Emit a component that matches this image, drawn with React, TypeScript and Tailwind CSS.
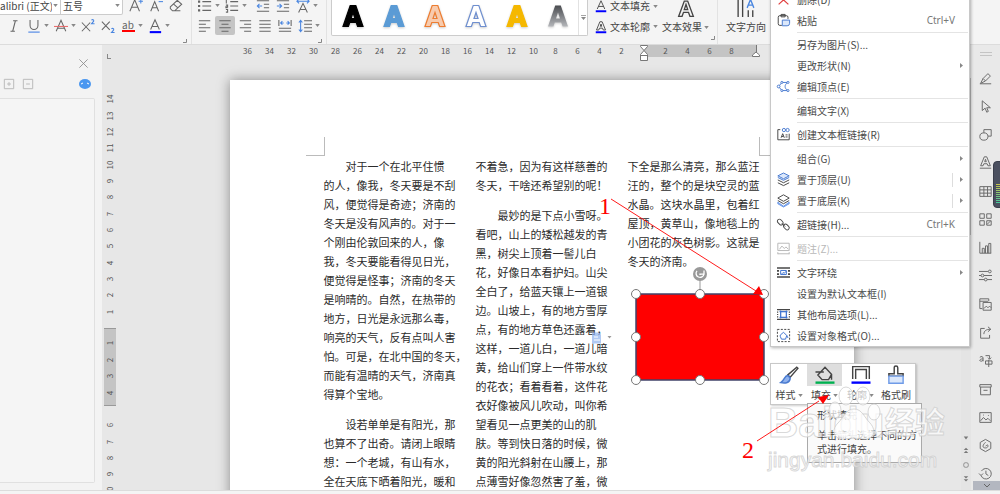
import type { ReactNode } from "react";
import { clsx } from "clsx";

// ============================================================
// Document content
// ============================================================

interface Paragraph {
  indent: boolean;
  lines: string[];
}

const COLUMNS: Paragraph[][] = [
  [
    {
      indent: true,
      lines: [
        "对于一个在北平住惯",
        "的人，像我，冬天要是不刮",
        "风，便觉得是奇迹；济南的",
        "冬天是没有风声的。对于一",
        "个刚由伦敦回来的人，像",
        "我，冬天要能看得见日光，",
        "便觉得是怪事；济南的冬天",
        "是响晴的。自然，在热带的",
        "地方，日光是永远那么毒，",
        "响亮的天气，反有点叫人害",
        "怕。可是，在北中国的冬天，",
        "而能有温晴的天气，济南真",
        "得算个宝地。",
      ],
    },
    {
      indent: true,
      lines: [
        "设若单单是有阳光，那",
        "也算不了出奇。请闭上眼睛",
        "想：一个老城，有山有水，",
        "全在天底下晒着阳光，暖和",
      ],
    },
  ],
  [
    { indent: false, lines: ["不着急，因为有这样慈善的", "冬天，干啥还希望别的呢！"] },
    {
      indent: true,
      lines: [
        "最妙的是下点小雪呀。",
        "看吧，山上的矮松越发的青",
        "黑，树尖上顶着一髻儿白",
        "花，好像日本看护妇。山尖",
        "全白了，给蓝天镶上一道银",
        "边。山坡上，有的地方雪厚",
        "点，有的地方草色还露着，",
        "这样，一道儿白，一道儿暗",
        "黄，给山们穿上一件带水纹",
        "的花衣；看着看着，这件花",
        "衣好像被风儿吹动，叫你希",
        "望看见一点更美的山的肌",
        "肤。等到快日落的时候，微",
        "黄的阳光斜射在山腰上，那",
        "点薄雪好像忽然害了羞，微",
      ],
    },
  ],
  [
    {
      indent: false,
      lines: [
        "下全是那么清亮，那么蓝汪",
        "汪的，整个的是块空灵的蓝",
        "水晶。这块水晶里，包着红",
        "屋顶，黄草山，像地毯上的",
        "小团花的灰色树影。这就是",
        "冬天的济南。",
      ],
    },
  ],
];

// ============================================================
// Small shared pieces
// ============================================================

function Svg({
  children,
  size = "size-[14px]",
  className,
}: {
  children: ReactNode;
  size?: string;
  className?: string;
}) {
  return (
    <svg
      viewBox="0 0 16 16"
      fill="none"
      stroke="currentColor"
      strokeWidth="1.2"
      aria-hidden="true"
      className={clsx("shrink-0 overflow-visible", size, className)}
    >
      {children}
    </svg>
  );
}

function Caret() {
  return (
    <svg viewBox="0 0 6 4" className="h-[3px] w-[5px] shrink-0 fill-[#888]" aria-hidden="true">
      <path d="M0 0h6L3 4z" />
    </svg>
  );
}

function Corner() {
  return (
    <svg viewBox="0 0 4 4" className="size-1 fill-none stroke-[#888]" aria-hidden="true">
      <path d="M3.5 0v3.5H0" />
    </svg>
  );
}

function Tool({
  label,
  caret,
  active,
  children,
}: {
  label: string;
  caret?: boolean;
  active?: boolean;
  children: ReactNode;
}) {
  return (
    <button
      type="button"
      aria-label={label}
      className={clsx(
        "flex h-[19px] shrink-0 items-center rounded-xs text-[#666]",
        caret ? "w-[27px]" : "w-5",
        active && "bg-[#c4c4c4]",
      )}
    >
      <span className="flex w-5 shrink-0 justify-center">{children}</span>
      {caret && <Caret />}
    </button>
  );
}

function Lines({ d, accent }: { d: string; accent?: string }) {
  return (
    <Svg>
      <path d={d} />
      {accent && <path d={accent} stroke="#4a86e0" />}
    </Svg>
  );
}

const LETTER_A = "M3 12 8 1l5 11M4.6 8.6h6.8";

// ============================================================
// Ribbon
// ============================================================

const WORD_ART = [
  { name: "黑色", fill: "#000000", stroke: "#000000" },
  { name: "蓝色", fill: "#5b9bd5", stroke: "#5b9bd5" },
  { name: "橙色轮廓", fill: "#f8cbad", stroke: "#ed7d31" },
  { name: "蓝色轮廓", fill: "#ffffff", stroke: "#6f8fcf" },
  { name: "金色", fill: "#f5b800", stroke: "#f5b800" },
  { name: "灰色渐变", fill: "url(#gray-fade)", stroke: "none" },
];

function FontGroup() {
  return (
    <div className="flex w-[192px] shrink-0 flex-col border-r border-[#e2e2e2]">
      <div className="-mt-1 flex h-[19px] items-center">
        <div className="mr-[3px] flex h-[19px] w-[123px] rounded-br-xs border border-l-0 border-[#ccc] bg-white text-[#444]">
          <label className="flex w-[61px] items-center justify-between border-r border-[#ccc] pr-0.5">
            <select aria-label="字体" className="w-[52px] appearance-none text-[10px] outline-none">
              <option>alibri (正文)</option>
            </select>
            <Caret />
          </label>
          <label className="flex flex-1 items-center justify-between pr-0.5 pl-0.5">
            <select aria-label="字号" className="w-10 appearance-none text-[10px] outline-none">
              <option>五号</option>
            </select>
            <Caret />
          </label>
        </div>
        <Tool label="增大字号">
          <Svg>
            <path d="M1 14 6.5 1 12 14M3 9.5h7" />
            <path d="M11 2.5h5M13.5 0v5" stroke="#4a86e0" />
          </Svg>
        </Tool>
        <Tool label="减小字号">
          <Svg>
            <path d="M2 14 6.5 3 11 14M3.6 10h5.8" />
            <path d="M11 3h5" stroke="#4a86e0" />
          </Svg>
        </Tool>
        <Tool label="清除格式">
          <Svg>
            <path d="m1.500 9 8-7.500 5 4.500-8 7.500H4L1.500 11zM5 5.500l5.500 5M4 13.500h9" />
          </Svg>
        </Tool>
      </div>
      <div className="mt-px flex items-center pl-1">
        <Tool label="倾斜">
          <Lines d="M7 2h5M4 14h5M9.600 2 6.500 14" />
        </Tool>
        <Tool label="下划线" caret>
          <Svg>
            <path d="M3.500 1v6.500a4.500 4.500 0 0 0 9 0V1" />
            <path d="M1.500 15h13" stroke="#6d9be8" strokeWidth="1.600" />
          </Svg>
        </Tool>
        <Tool label="删除线" caret>
          <Svg>
            <path d="M2.500 14 8 1.500 13.500 14M4.500 10.500h7" />
            <path d="M0 8.500h16" stroke="#e86a6a" />
          </Svg>
        </Tool>
        <Tool label="上标">
          <Svg>
            <path d="m1 4 9.500 10M10.500 4 1 14" />
            <path d="M12 1.500c1-1.500 3-.5 2.500 1L12 5.500h3.500" stroke="#4a86e0" />
          </Svg>
        </Tool>
        <Tool label="下标">
          <Svg>
            <path d="m1 3 9 9.500M10 3l-9 9.500" />
            <path d="M12 11.500c1-1.500 3-.5 2.500 1L12 15.500h3.500" stroke="#4a86e0" />
          </Svg>
        </Tool>
        <Tool label="突出显示" caret>
          <span className="flex w-[13px] flex-col items-center border-b-2 border-[#ff0000] text-[10px] leading-[10px]">
            ab
          </span>
        </Tool>
        <Tool label="字体颜色" caret>
          <Svg>
            <path d={LETTER_A} />
            <path d="M2 15h13" stroke="#0000ff" strokeWidth="2.400" />
          </Svg>
        </Tool>
      </div>
      <div className="mt-1 flex justify-end pr-1">
        <Corner />
      </div>
    </div>
  );
}

function ParagraphGroup() {
  return (
    <div className="flex w-[135px] shrink-0 flex-col border-r border-[#e2e2e2] pl-[3px]">
      <div className="-mt-1 flex h-[19px] items-center">
        <Tool label="项目符号" caret>
          <Svg>
            <path d="M5 3h10M5 8h10M5 13h10" />
            <path d="M0 3h2.500M0 8h2.500M0 13h2.500" strokeWidth="2.400" />
          </Svg>
        </Tool>
        <Tool label="编号" caret>
          <Svg>
            <path d="M6 3h9M6 8h9M6 13h9M1.500 1v4M1 7h2v2H1v1h2M1 12h2v3H1" />
          </Svg>
        </Tool>
        <div className="ml-1 flex">
          <Tool label="减少缩进">
            <Lines d="M1 2h14M9 6h6M9 10h6M1 14h14" accent="M7 8H1.500M4 5.500 1.500 8 4 10.500" />
          </Tool>
          <Tool label="增加缩进">
            <Lines d="M1 2h14M9 6h6M9 10h6M1 14h14" accent="M1 8h5.500M4 5.500 6.500 8 4 10.500" />
          </Tool>
          <Tool label="中文版式" caret>
            <Lines
              d="M3 15.500 8 5l5 10.500M4.600 12h6.800"
              accent="M1 2.500h14M3.500 0 1 2.500 3.500 5M12.500 0 15 2.500 12.500 5"
            />
          </Tool>
        </div>
      </div>
      <div className="mt-px flex items-center">
        <Tool label="左对齐">
          <Lines d="M1 2h13M1 6h8M1 10h13M1 14h8" />
        </Tool>
        <Tool label="居中对齐" active>
          <Lines d="M1.500 2h13M4 6h8M1.500 10h13M4 14h8" />
        </Tool>
        <Tool label="右对齐">
          <Lines d="M2 2h13M7 6h8M2 10h13M7 14h8" />
        </Tool>
        <Tool label="两端对齐">
          <Lines d="M1.500 2h13M1.500 6h13M1.500 10h13M1.500 14h13" />
        </Tool>
        <Tool label="分散对齐">
          <Lines
            d="M1 1v7M15 1v7M1 10.500h14M1 14h14"
            accent="M3 4.500h3.500M5 2.500 3 4.500l2 2M13 4.500H9.500M11 2.500l2 2-2 2"
          />
        </Tool>
        <Tool label="行距" caret>
          <Lines
            d="M7 2h9M7 6h9M7 10h9M7 14h9"
            accent="M3 1.500v13M1 4l2-2.500L5 4M1 12l2 2.500L5 12"
          />
        </Tool>
      </div>
      <div className="mt-1 flex justify-end pr-1">
        <Corner />
      </div>
    </div>
  );
}

function StylesGroup() {
  return (
    <div className="flex shrink-0 border-r border-[#e2e2e2] pl-1">
      <div className="flex h-9 w-[257px] rounded-b-xs border border-t-0 border-[#ccc] bg-white">
        {WORD_ART.map((art) => (
          <button
            key={art.name}
            type="button"
            aria-label={art.name}
            className="flex w-[41px] shrink-0 items-center justify-center pb-1"
          >
            <svg viewBox="0 0 24 24" className="size-6 drop-shadow-[0_1px_1px_rgba(0,0,0,0.2)]">
              <defs>
                <linearGradient id="gray-fade" x1="0" y1="0" x2="0" y2="1">
                  <stop offset="0" stopColor="#4a4c50" />
                  <stop offset="1" stopColor="#b4b6ba" />
                </linearGradient>
              </defs>
              <path
                d="M9.200 1.500h5.600L22 22.500h-5.400l-1.400-4H8.800l-1.400 4H2zM10 14.500h4l-2-6z"
                fill={art.fill}
                stroke={art.stroke}
                strokeWidth="1.200"
                fillRule="evenodd"
              />
            </svg>
          </button>
        ))}
        <button
          type="button"
          aria-label="更多样式"
          className="ml-auto flex w-[9px] items-center justify-center border-l border-[#e2e2e2]"
        >
          <svg viewBox="0 0 6 6" className="size-[5px] fill-[#888]">
            <path d="M0 0h6v1H0zM0 2.500h6L3 6z" />
          </svg>
        </button>
      </div>
      <div className="ml-[7px] flex flex-col">
        <button type="button" className="-mt-1 flex h-5 items-center gap-[3px] whitespace-nowrap text-[#444]">
          <Svg size="size-[12px]">
            <path d={LETTER_A} />
            <path d="M1 15h14" stroke="#0000ff" strokeWidth="2.600" />
          </Svg>
          文本填充 <Caret />
        </button>
        <button type="button" className="flex h-[21px] items-center gap-[3px] whitespace-nowrap text-[#444]">
          <Svg size="size-[12px]">
            <path d="M2 12 6.500 1h3L14 12h-3l-1-2.500H6L5 12zM7 7h2L8 4z" />
            <path d="M1 15h14" stroke="#0000ff" strokeWidth="2.600" />
          </Svg>
          文本轮廓 <Caret />
        </button>
      </div>
      <button type="button" className="ml-1 flex flex-col items-center whitespace-nowrap text-[#444]">
        <Svg size="size-[18px]">
          <path d="M1.500 14.500 6.500 1h3l5 13.500h-3l-1.300-3.500H5.800l-1.300 3.500zM6.500 8.500h3L8 4z" />
        </Svg>
        <span className="mt-px flex items-center gap-0.5">
          文本效果 <Caret />
        </span>
      </button>
      <div className="flex items-end px-0.5 pb-1">
        <Corner />
      </div>
    </div>
  );
}

function Ribbon() {
  return (
    <header className="flex h-[45px] shrink-0 overflow-hidden border-b border-[#dcdcdc] bg-[#f4f4f4] text-[10px] leading-4">
      <FontGroup />
      <ParagraphGroup />
      <StylesGroup />
      <button type="button" className="ml-2 flex shrink-0 flex-col items-center text-[#444]">
        <Svg size="size-[18px]">
          <path d="M1 0v15M5 0v15M10 9v6M14 9v6" />
          <path d="m9 7 3-7.500L15 7M10 4.500h4" stroke="#4a86e0" />
        </Svg>
        <span className="mt-px">文字方向</span>
      </button>
    </header>
  );
}

// ============================================================
// Left pane and rulers
// ============================================================

function LeftPane() {
  return (
    <aside className="flex w-[102px] shrink-0 flex-col bg-[#f3f3f3] pb-[7px]">
      <div className="flex h-[30px] items-end justify-end pr-[13px] pb-1.5">
        <button type="button" aria-label="关闭" className="text-[#888]">
          <Svg size="size-[11px]">
            <path d="m2 2 12 12M14 2 2 14" />
          </Svg>
        </button>
      </div>
      <div className="flex h-[23px] items-start gap-[9px] pt-1 pr-[11px] pl-1 text-[#bbb]">
        <button type="button" aria-label="展开">
          <Svg size="size-[10px]">
            <path d="M.5.5h15v15H.5zM5 8h6M8 5v6" strokeWidth="1.600" />
          </Svg>
        </button>
        <button type="button" aria-label="折叠">
          <Svg size="size-[10px]">
            <path d="M.5.5h15v15H.5zM5 8h6" strokeWidth="1.600" />
          </Svg>
        </button>
        <button type="button" aria-label="智能识别" className="ml-auto">
          <svg viewBox="0 0 12 10" className="h-[10px] w-3">
            <ellipse cx="6" cy="5" rx="6" ry="5" fill="#4a97f0" />
            <path d="M2 5l2-1M10 5 8 4" stroke="#fff" fill="none" />
          </svg>
        </button>
      </div>
      <div className="mr-[7px] flex-1 rounded-r-xs border border-l-0 border-[#e0e0e0] bg-[#f5f5f5]" />
    </aside>
  );
}

function VerticalNumbers({ values }: { values: number[] }) {
  return values.map((n) => (
    <span key={n} className="flex flex-1 items-center justify-center">
      <span className="-rotate-90">{n}</span>
    </span>
  ));
}

function VerticalRuler() {
  return (
    <div className="flex w-[14px] shrink-0 flex-col overflow-hidden pl-0.5 text-[8px] leading-3 text-[#555]">
      <span className="ml-[3px] h-[14px] w-1 shrink-0 self-start border-b border-l border-[#888] [clip-path:inset(9px_0_0_0)]" />
      <div className="mt-8 flex h-[229px] shrink-0 flex-col">
        <VerticalNumbers values={[14, 13, 12, 11, 10, 9, 8, 7, 6, 5, 4, 3, 2, 1]} />
      </div>
      <div className="mt-2 flex h-[78px] shrink-0 flex-col border-y border-[#999] bg-[#c4c4c4] pt-1.5 pb-1">
        <VerticalNumbers values={[1, 2, 3, 4]} />
      </div>
      <div className="mt-[11px] flex h-[82px] shrink-0 flex-col">
        <VerticalNumbers values={[6, 7, 8, 9, 10]} />
      </div>
    </div>
  );
}

const RULER_LEFT = [36, 34, 32, 30, 28, 26, 24, 22, 20, 18, 16, 14, 12, 10, 8, 6, 4, 2];
const RULER_RIGHT = [2, 4, 6, 8];

function HorizontalRuler() {
  return (
    <div className="mx-auto flex h-3 w-[624px] shrink-0 pl-[7px] text-center text-[8px] leading-3 text-[#555]">
      {RULER_LEFT.map((n) => (
        <span key={n} className="w-[22px] shrink-0">
          {n}
        </span>
      ))}
      <div className="relative ml-[11px] flex w-[112px] shrink-0 bg-[#c4c4c4] pl-[11px]">
        {RULER_RIGHT.map((n) => (
          <span key={n} className="w-[22px] shrink-0">
            {n}
          </span>
        ))}
        <svg viewBox="0 0 8 16" className="absolute top-0 -left-1 h-4 w-2 fill-white stroke-[#777]">
          <path d="M.5.5h7v1L4 5.500.5 1.500zM4 5.500l3.500 4v6h-7v-6zM.5 10.500h7" />
        </svg>
        <svg viewBox="0 0 8 12" className="absolute top-0 -right-1 h-3 w-2 fill-white stroke-[#777]">
          <path d="M4.500 0v7M4 7l3.500 3v1.500h-7V10z" />
        </svg>
      </div>
    </div>
  );
}

// ============================================================
// Page with the selected shape
// ============================================================

const HANDLES = [
  [5, 27],
  [69, 27],
  [133, 27],
  [5, 70],
  [133, 70],
  [5, 113],
  [69, 113],
  [133, 113],
];

function SelectedShape() {
  return (
    <svg viewBox="0 0 138 119" className="absolute top-[187px] left-[401px] h-[119px] w-[138px]">
      <path d="M69 10v17" stroke="#999" />
      <rect x="5" y="27" width="128" height="86" fill="#ff0000" stroke="#41436a" strokeWidth="1.500" />
      {HANDLES.map(([cx, cy]) => (
        <circle key={`${cx}-${cy}`} cx={cx} cy={cy} r="4.500" fill="#fff" stroke="#777" />
      ))}
      <circle cx="69" cy="7" r="7" fill="#999" />
      <path
        d="M66 3.800A4 4 0 1 0 73 7M73 3.500v3.700h-3.700M69 6.500v1.500"
        stroke="#fff"
        strokeWidth="1.300"
        fill="none"
      />
    </svg>
  );
}

function Page() {
  return (
    <main className="relative mx-auto mt-[23px] h-[900px] w-[624px] shrink-0 bg-white px-[94px] pt-[77px] shadow-[0_0_12px_rgba(0,0,0,0.4)]">
      <span className="absolute top-[57px] left-[76px] size-[19px] border-r border-b border-[#bbb]" />
      <span className="absolute top-[57px] right-[76px] size-[19px] border-b border-l border-[#bbb]" />
      <div className="grid grid-cols-3 gap-5 text-[11px] leading-[19px] whitespace-nowrap text-[#2b2b2b]">
        {COLUMNS.map((paragraphs, i) => (
          <div key={i} className="flex min-w-0 flex-col gap-[11px]">
            {paragraphs.map((p) => (
              <p key={p.lines[0]} className={clsx(p.indent && "indent-[22px]")}>
                {p.lines.map((line) => (
                  <span key={line}>
                    {line}
                    <br />
                  </span>
                ))}
              </p>
            ))}
          </div>
        ))}
      </div>
      <SelectedShape />
      {/* Paste options */}
      <svg viewBox="0 0 22 12" className="absolute top-[252px] left-[361px] h-3 w-[22px]">
        <path d="M1 .5h7l2 2v9H1z" fill="#8fb2ee" fillOpacity="0.700" />
        <path d="M3 5h4M3 8h6" stroke="#fff" />
        <path d="M16.500 4h4l-2 2.500z" fill="#999" />
      </svg>
    </main>
  );
}

// ============================================================
// Context menu
// ============================================================

interface MenuItem {
  label: string;
  icon?: ReactNode;
  shortcut?: string;
  submenu?: boolean;
  split?: boolean;
  disabled?: boolean;
}

const MENU: MenuItem[][] = [
  [
    { label: "删除(D)", icon: <path d="m2 3 12 11M14 3 2 14" stroke="#e04040" strokeWidth="1.500" /> },
    {
      label: "粘贴",
      shortcut: "Ctrl+V",
      icon: (
        <>
          <path d="M6 14H3.500a2 2 0 0 1-2-2V4a2 2 0 0 1 2-2h8a2 2 0 0 1 2 2v2M5 .5h5v3H5z" />
          <path d="M6.500 7.500h9v4a3 3 0 0 1-3 3h-6z" fill="#dce8fb" stroke="#4a7bd0" />
        </>
      ),
    },
  ],
  [
    { label: "另存为图片(S)..." },
    { label: "更改形状(N)", submenu: true },
    {
      label: "编辑顶点(E)",
      icon: (
        <>
          <path d="M2 8 6 3h7M2 8l4 5h7M13 3c-4 3-4 7 0 10" stroke="#4a7bd0" />
          <g fill="#fff" stroke="#4a7bd0">
            <circle cx="2" cy="8" r="1.700" />
            <circle cx="6" cy="3" r="1.300" />
            <circle cx="13.500" cy="3" r="1.300" />
            <circle cx="6" cy="13" r="1.300" />
            <circle cx="13.500" cy="13" r="1.300" />
          </g>
        </>
      ),
    },
  ],
  [{ label: "编辑文字(X)" }],
  [
    {
      label: "创建文本框链接(R)",
      icon: (
        <>
          <path d="M4 2H1v12.500h14V7M5 12l2-5 2 5M6 10.500h2M10.500 8.500H13M10.500 11H13" />
          <g stroke="#4a7bd0">
            <circle cx="8.500" cy="2.500" r="2" />
            <circle cx="13" cy="2.500" r="2" />
          </g>
        </>
      ),
    },
  ],
  [
    { label: "组合(G)", submenu: true },
    {
      label: "置于顶层(U)",
      submenu: true,
      split: true,
      icon: (
        <>
          <path d="m1 8.500 7 3.500 7-3.500M1 12l7 3.500 7-3.500" />
          <path d="m8 0 7 3.500L8 7 1 3.500zM1 5.500 8 9l7-3.500" fill="#dce8fb" stroke="#4a7bd0" />
        </>
      ),
    },
    {
      label: "置于底层(K)",
      submenu: true,
      split: true,
      icon: (
        <>
          <path d="m1 10 7 5 7-5v2l-7 4-7-4z" fill="#8fb2ee" stroke="#6f9be8" />
          <path d="m8 1 7 4-7 4-7-4zM1 8l7 4 7-4" fill="#fff" />
        </>
      ),
    },
  ],
  [
    {
      label: "超链接(H)...",
      shortcut: "Ctrl+K",
      icon: (
        <>
          <rect x="0" y="2.500" width="8" height="5" rx="2.500" transform="rotate(45 4 5)" />
          <rect x="7.500" y="8.500" width="8" height="5" rx="2.500" transform="rotate(45 11.500 11)" />
          <path d="m6 6.500 4 4" />
        </>
      ),
    },
  ],
  [
    {
      label: "题注(Z)...",
      disabled: true,
      icon: <path d="M1 1.500h14v9H1zM3 9l3-4 3 3 2-2 3 3M1 14.500h14M1 12.500v2.500M15 12.500v2.500" />,
    },
  ],
  [
    {
      label: "文字环绕",
      submenu: true,
      icon: (
        <>
          <path d="M0 2.500h16M0 13.500h16" strokeWidth="2" />
          <path d="M0 6h2.500M0 10h2.500M13.500 6H16M13.500 10H16" strokeWidth="2" />
          <path d="M4.500 5.500h7v5h-7zM5.500 10l2-2 1.500 1 2-2.500" stroke="#3f73cf" />
        </>
      ),
    },
    { label: "设置为默认文本框(I)" },
    {
      label: "其他布局选项(L)...",
      icon: (
        <>
          <path d="M0 2h16M0 14h16M0 5h1.500M0 8h1.500M0 11h1.500M14.500 5H16M14.500 8H16M14.500 11H16" strokeWidth="1.500" />
          <path d="M4.500 4.500h7v7h-7zM3 4.500h10M3 11.500h10M4.500 3v10M11.500 3v10" stroke="#3f73cf" />
        </>
      ),
    },
    {
      label: "设置对象格式(O)...",
      icon: (
        <>
          <rect x=".5" y=".5" width="15" height="15" strokeDasharray="2.500 1.700" />
          <path d="m4 7.500 4-3.500 4 4-1.500 4.500H5.500L4 9zM12 8l1.500 3" stroke="#3f73cf" />
        </>
      ),
    },
  ],
];

function ContextMenu() {
  return (
    <nav
      aria-label="右键菜单"
      className="absolute -top-3 right-[30px] w-[200px] border border-[#c8c8c8] bg-white text-[10px] shadow-[1px_1px_3px_rgba(0,0,0,0.3)]"
    >
      {MENU.map((group, i) => (
        <div key={i}>
          {i > 0 && <hr className="my-px mr-px ml-[26px] border-[#e4e4e4]" />}
          {group.map((item) => (
            <button
              key={item.label}
              type="button"
              disabled={item.disabled}
              className={clsx(
                "flex h-[21px] w-full items-center pl-1.5 text-left whitespace-nowrap",
                item.disabled ? "text-[#b8b8b8]" : "text-[#484848]",
              )}
            >
              <span className="w-5 shrink-0">{item.icon && <Svg size="size-[13px]">{item.icon}</Svg>}</span>
              <span>{item.label}</span>
              {item.shortcut && (
                <span className="mr-[14px] ml-auto font-['Noto_Sans'] text-[#777]">{item.shortcut}</span>
              )}
              {item.submenu && (
                <span className="mr-1.5 ml-auto flex items-center gap-[7px]">
                  {item.split && <span className="h-[14px] w-px bg-[#ddd]" />}
                  <svg viewBox="0 0 3 5" className="h-[5px] w-[3px] fill-[#888]">
                    <path d="M0 0v5l3-2.500z" />
                  </svg>
                </span>
              )}
            </button>
          ))}
        </div>
      ))}
    </nav>
  );
}

// ============================================================
// Mini toolbar under the shape
// ============================================================

function MiniToolbar() {
  return (
    <div className="absolute top-[363px] right-[78px] text-[10px] leading-[14px] text-[#444]">
      <div className="flex h-[42px] w-[146px] border border-[#c8c8c8] bg-white shadow-[1px_1px_2px_rgba(0,0,0,0.2)]">
        <button type="button" className="flex w-9 flex-col items-center pt-0.5">
          <Svg size="size-[20px]" className="pb-px">
            <path d="M14.500 1 7 7.500l2 2L15.500 2z" />
            <path d="M7 8c-3 0-2.500 4-6 6 4 1 8 0 8-4z" fill="#8fb2ee" stroke="#4a7bd0" />
          </Svg>
          <span className="mt-0.5 flex items-center gap-0.5">
            样式 <Caret />
          </span>
        </button>
        <button type="button" className="flex w-[35px] flex-col items-center">
          <span className="flex w-full justify-center bg-[#dedede] pt-0.5">
            <Svg size="size-[20px]" className="pb-px">
              <path d="m2 7.500 6-6.500 5.500 6-2.500 4.500H5.500zM0 5h7M13.500 7v4.500" />
              <path d="M0 14h16" stroke="#00b050" strokeWidth="2" />
            </Svg>
          </span>
          <span className="mt-0.5 flex items-center gap-0.5">
            填充 <Caret />
          </span>
        </button>
        <button type="button" className="flex w-[37px] flex-col items-center pt-0.5">
          <Svg size="size-[20px]" className="pb-px">
            <path d="M1 11V.5h14V11M3.500 11V3h9v8" />
            <path d="M0 14h16" stroke="#0000ff" strokeWidth="2" />
          </Svg>
          <span className="mt-0.5 flex items-center gap-0.5">
            轮廓 <Caret />
          </span>
        </button>
        <button type="button" className="flex w-[34px] flex-col items-center pt-0.5">
          <Svg size="size-[20px]" className="pb-px">
            <path d="M6.500 6.500V1.500a1.500 1.500 0 0 1 3 0v5h4.500v2H2v-2z" />
            <path d="M2 8.500h12v6H2z" fill="#dce8fb" stroke="#6f9be8" />
          </Svg>
          <span className="mt-0.5 whitespace-nowrap">格式刷</span>
        </button>
      </div>
      <div
        role="tooltip"
        className="-mt-[2px] ml-[37px] h-[60px] w-[115px] border border-[#aaa] bg-[#fafafa] py-1 pl-[9px]"
      >
        <p>形状填充</p>
        <p className="mt-1.5 w-[100px]">单击箭头选择不同的方式进行填充。</p>
      </div>
    </div>
  );
}

// ============================================================
// Watermark and the numbered arrows
// ============================================================

function Watermark() {
  return (
    <div className="absolute top-[386px] right-[52px] w-[180px] pt-2 font-['Liberation_Sans','Noto_Sans_CJK_SC',sans-serif] font-bold text-white/70 [-webkit-text-stroke:1px_rgba(200,200,200,0.7)]">
      <div className="flex h-[58px] items-center">
        <span className="text-[42px] leading-[58px]">Baidu</span>
        <span className="text-[30px] leading-[58px]">经验</span>
      </div>
      <p className="-mt-1 text-[21px] leading-6 font-normal">jingyan.baidu.com</p>
      <svg viewBox="0 0 56 54" className="absolute top-0 left-[58px] h-[54px] w-14 fill-white/70 stroke-[#c8c8c8]/70">
        <ellipse cx="9" cy="24" rx="6" ry="8" />
        <ellipse cx="20" cy="10" rx="7" ry="9" />
        <ellipse cx="37" cy="10" rx="7" ry="9" />
        <ellipse cx="48" cy="26" rx="6" ry="8" />
        <path d="M28 23c8 0 10 8 16 14 8 9 2 17-6 16-7-1-13-1-20 0-9 1-14-8-6-16 7-7 8-14 16-14z" />
      </svg>
    </div>
  );
}

function Annotations() {
  return (
    <div className="pointer-events-none absolute top-[190px] right-[165px] h-[280px] w-[240px] font-['Liberation_Serif',serif] text-[24px] leading-6 text-[#ff0000]">
      <svg viewBox="0 0 240 280" className="absolute inset-0" fill="#ff0000" stroke="#ff0000">
        <path d="m16 9 145 92M162 251l62-40" strokeWidth="0.900" />
        <path d="m168 105-4-9-6 8zM234 205l-11 2 5 7z" stroke="none" />
      </svg>
      <span className="absolute top-1 left-1">1</span>
      <span className="absolute top-[248px] left-[147px]">2</span>
    </div>
  );
}

// ============================================================
// Right tool bar
// ============================================================

const SIDE_TOOLS: { label: string; icon: ReactNode }[] = [
  { label: "样式", icon: <path d="M1 14.500h14M2 14l3-6 6-6 3 3-6 6zM5 8l3 3" /> },
  { label: "选择", icon: <path d="M4 1v12l3.500-3 2 5 2-1-2-4.500H14z" /> },
  { label: "形状", icon: <path d="M6 6V2h9v8h-4M11 10.500a5 4.500 0 1 1-10 0 5 4.500 0 0 1 10 0z" /> },
  { label: "艺术字", icon: <path d="M2 12 6.500 1h3L14 12h-3l-1-2.500H6L5 12zM7 7h2L8 4zM1 15h14" /> },
  { label: "表格", icon: <path d="M1 2h14v12H1zM1 6h14M1 10h14M6 2v12M10.500 2v12" /> },
  { label: "图库", icon: <path d="M1 1h5.500v5.500H1zM9.500 1H15v5.500H9.500zM1 9.500h5.500V15H1zM9.500 9.500H15V15H9.500zM10 14l4-4" /> },
  { label: "图表", icon: <path d="M1 1v14h14M4 15V9h2.500v6M8 15V6h2.500v9M12 15V3h2.500v12" /> },
  {
    label: "属性",
    icon: (
      <path d="M0 3h11M0 8h2.500M6 8h10M0 13h6.500M10 13h6M15 3a1.700 1.700 0 1 1-3.400 0 1.700 1.700 0 0 1 3.400 0zM6 8a1.700 1.700 0 1 1-3.400 0A1.700 1.700 0 0 1 6 8zM10 13a1.700 1.700 0 1 1-3.400 0 1.700 1.700 0 0 1 3.400 0z" />
    ),
  },
  { label: "图片", icon: <path d="M4 13H1V1h11v3M1 4h10M5 5.500h10V15H5zM6 13l3-3 2 2 2-2 2 2" /> },
  { label: "分享", icon: <path d="M7 3H2v12h11v-4M6 10c0-4 3-6 8-6M11 1l3.500 3L11 7" /> },
  { label: "翻译", icon: <path d="M1 4c2-1.500 4-1 4 1v4M5 6C2 6 1 7 1 8s3 1.500 4-.5M8 2h5v4M11 4.500 13 6.500l2-2M8 8.500h8v4H8zM12 7v9" /> },
  { label: "归档", icon: <path d="M1 2h14v3H1zM2 5v9.500h12V5M5.500 9h5" /> },
  { label: "素材", icon: <path d="M1 2h14v12H1zM2 12l3.500-4 3 3 2.500-2 3 3M11 5.500h1M5 5h1" /> },
  { label: "会员", icon: <path d="m8 .5 6.500 3.700v7.600L8 15.500l-6.500-3.700V4.200zM8 4c-5 5-3 7 0 7s4-3 2-4L8 9" /> },
  { label: "历史", icon: <path d="M3 5a6.500 6.500 0 1 1-.5 5.500M0 8l2.500 2.500L5 8M8.500 4.500v4l3 2" /> },
];

function SideBar() {
  return (
    <aside className="relative flex w-[29px] shrink-0 flex-col items-center overflow-hidden bg-[#e9e9e9] pt-[7px] text-[#6a6a6a]">
      <span className="h-1 w-3 shrink-0 border-y border-[#c4c4c4]" />
      <div className="mt-2 flex h-[424px] shrink-0 flex-col">
        {SIDE_TOOLS.map((tool) => (
          <button key={tool.label} type="button" aria-label={tool.label} className="flex flex-1 items-center">
            <Svg size="size-[13px]">{tool.icon}</Svg>
          </button>
        ))}
      </div>
      <button
        type="button"
        aria-label="更多"
        className="absolute right-0 bottom-0 flex h-[9px] w-[27px] items-center justify-center bg-[#b3b7c0]"
      >
        <svg viewBox="0 0 8 4" className="h-1 w-2 fill-none stroke-[#666]">
          <path d="m1 0 3 3 3-3" />
        </svg>
      </button>
      {/* Level meter docked to the edge */}
      <span className="absolute top-[116px] -right-1 flex h-[47px] w-[11px] flex-col justify-end rounded-sm border border-[#3b3f4c] bg-[#4b5060] px-0.5 pb-1">
        <span className="h-[19px] w-1 bg-[repeating-linear-gradient(to_bottom,transparent_0_1px,#4b5060_1px_2px),linear-gradient(to_bottom,#c9c44a,#46c9a0)]" />
      </span>
    </aside>
  );
}

function ScrollColumn() {
  return (
    <div className="relative flex w-[10px] shrink-0 flex-col items-center justify-end bg-[#e4e4e4] pb-1.5 text-[#777]">
      <span className="absolute top-[33px] right-0 h-[157px] w-px bg-[#b8b8b8]" />
      <Svg size="h-[50px] w-[6px]">
        <g transform="translate(0 -58)" fill="currentColor" stroke="none">
          <path d="M2 6h12L8 14zM8 36l6 6H2zM8 44l6 6H2zM2 120h12l-6 6zM2 112h12l-6 6z" />
        </g>
        <rect x="2" y="18" width="12" height="12" rx="4" strokeWidth="2" />
      </Svg>
    </div>
  );
}

export default function App() {
  return (
    <div className="relative flex h-screen flex-col overflow-hidden bg-[#e7e7e7] font-['Noto_Sans_CJK_SC',sans-serif]">
      <Ribbon />
      <div className="flex min-h-0 flex-1">
        <LeftPane />
        <VerticalRuler />
        <div className="flex min-w-0 flex-1 flex-col overflow-hidden pl-1.5">
          <HorizontalRuler />
          <Page />
        </div>
        <ScrollColumn />
        <SideBar />
      </div>
      <footer className="h-1 shrink-0 border-t border-[#dcdcdc] bg-[#f4f4f4]" />
      <MiniToolbar />
      <Watermark />
      <ContextMenu />
      <Annotations />
    </div>
  );
}
